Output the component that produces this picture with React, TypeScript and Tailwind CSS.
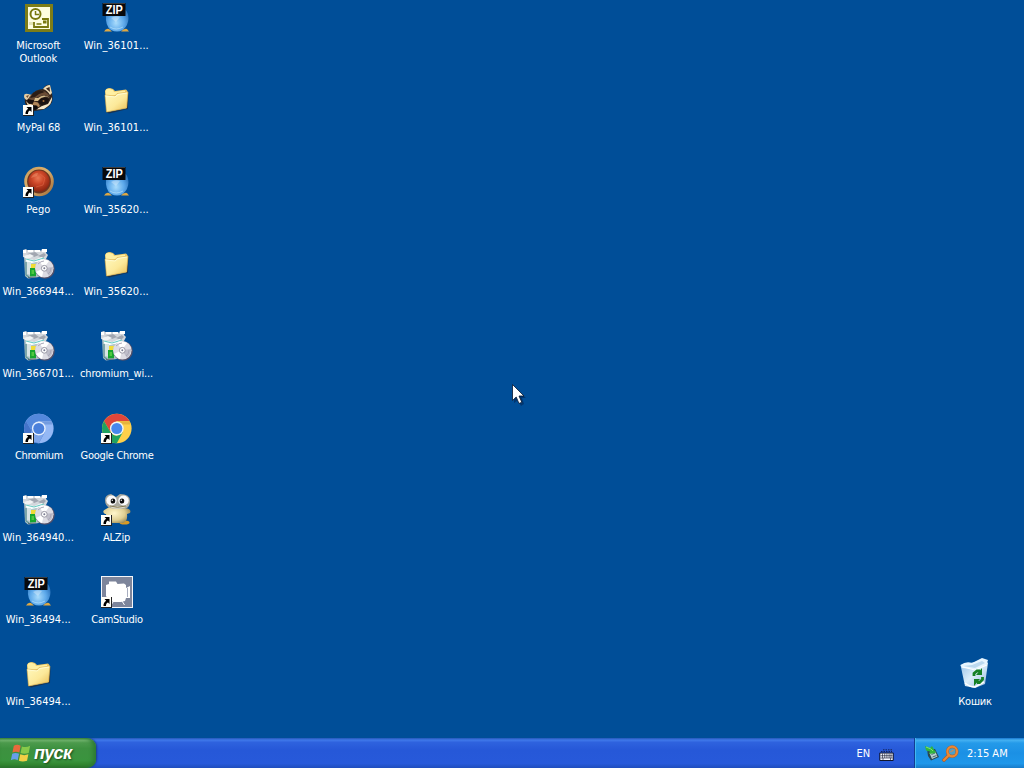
import React from 'react';

type IconName = 'outlook' | 'raccoon' | 'pego' | 'setup' | 'chromium' | 'chrome' | 'zip' | 'folder' | 'alzip' | 'cam' | 'bin';
type Item = { icon: IconName; label: string; shortcut?: boolean; track?: string };

const svgClass = 'block h-8 w-8 overflow-visible';
const shiftedClass = '-ml-px block h-8 w-8 overflow-visible';

function Shortcut() {
  return (
    <svg viewBox="0 0 11 11" className="absolute bottom-0 left-0 h-[11px] w-[11px]">
      <rect width="11" height="11" fill="#222" />
      <rect x="0" y="0" width="10" height="10" fill="#fffef8" />
      <path d="M3.500 2H8.500V7L7 5.500C5.500 6.200 5 7.200 5 9H2.500C2.300 6.700 3.300 5 5.200 3.700Z" fill="#000" />
    </svg>
  );
}

function Outlook() {
  return (
    <svg viewBox="0 0 32 32" className={svgClass}>
      <rect x="2" y="2" width="28" height="28" fill="#7d7d18" />
      <rect x="5" y="5" width="22" height="22" fill="#fdfde0" />
      <circle cx="12.500" cy="12" r="5" fill="#fffff5" stroke="#77770f" strokeWidth="2" />
      <path d="M12.500 9v3.500h3.500" fill="none" stroke="#77770f" strokeWidth="1.500" />
      <path d="M19 17H25V25H11V20" fill="none" stroke="#77770f" strokeWidth="1.800" />
      <path d="M13.500 22h5" stroke="#77770f" strokeWidth="1.500" />
      <rect x="20" y="18.500" width="3.500" height="3" fill="#77770f" />
      <path d="M7 20v3M9 20v3" stroke="#c9c98a" />
    </svg>
  );
}

function Raccoon() {
  return (
    <svg viewBox="0 0 32 32" className={shiftedClass}>
      <path d="M3 14Q1 10 5 10L9 11Q14 5 21 5Q24 0 28 1L30 9Q31 15 30 18Q27 24 20 26L12 27L5 22Q2 19 3 14Z" fill="#33241c" />
      <path d="M21 5Q24 1 28 1L30 9L28 11Q25 6 21 5Z" fill="#ead9b6" />
      <path d="M24 4.500L27.500 3L28 8Z" fill="#3b271f" />
      <path d="M2 12Q2 9 6 10L10 11L5 16Q2 15 2 12Z" fill="#e4cda4" />
      <path d="M4 12L7 11L5.500 14Z" fill="#6e4d35" />
      <path d="M10 10Q16 6 22 7Q26 9 28 13L22 11L16 13L12 16L6 17Q7 12 10 10Z" fill="#6b4c35" />
      <path d="M11 9Q17 5 23 8L17 10L13 13L8 14Z" fill="#2b1c15" />
      <path d="M16 14Q22 9 28 14L24 12.500L19 14L16 17L12 17L13 14Z" fill="#d8bd8c" />
      <path d="M30 13Q31 20 22 25L14 25.500L20 22L26 20Z" fill="#f7e8ca" />
      <path d="M17 16Q22 12 27 15L26 19L20 21.500L16 18Z" fill="#1b1210" />
      <circle cx="21.500" cy="17" r="1" fill="#a9713b" />
      <path d="M6 15L12 16.500L11 20L5 19Z" fill="#1b1210" />
      <path d="M4 17L7 20L10 20L9 22L6 22Z" fill="#ead3ab" />
      <path d="M12 17.500L16 18.500L18 22L15 24L11 23L10 21Z" fill="#b08558" />
      <ellipse cx="13" cy="23.500" rx="2.800" ry="2.200" fill="#100b0b" />
    </svg>
  );
}

function Pego() {
  return (
    <svg viewBox="0 0 32 32" className={shiftedClass}>
      <defs>
        <radialGradient id="pegoBall" cx=".45" cy=".35" r=".65">
          <stop stopColor="#ea7752" /><stop offset=".45" stopColor="#cb4527" /><stop offset="1" stopColor="#8a2410" />
        </radialGradient>
        <linearGradient id="pegoRing" x1="0" y1="0" x2="1" y2="1">
          <stop stopColor="#c79a58" /><stop offset=".45" stopColor="#deb16e" /><stop offset="1" stopColor="#9c6734" />
        </linearGradient>
      </defs>
      <circle cx="17" cy="15.500" r="14.800" fill="url(#pegoRing)" />
      <circle cx="17" cy="15.500" r="11.900" fill="#6e3520" />
      <circle cx="17" cy="15.200" r="10.600" fill="url(#pegoBall)" />
      <path d="M9 12Q11 7 16 7L15 10Z" fill="#f4a079" opacity=".4" />
      <path d="M18 8L23 12L21 19L14 21" fill="none" stroke="#e36c49" opacity=".5" />
    </svg>
  );
}

function Setup() {
  return (
    <svg viewBox="0 0 32 32" className={shiftedClass}>
      <path d="M2 7L12 5L24 7L24 28L6 30.500L3 28Z" fill="#b3c4c7" />
      <path d="M1 2L4 1L5 2L18 2L19 3L20 1L25 1L24 5L26 7L24 11L20 10L11 12L1 9Z" fill="#d3d7dc" />
      <path d="M1 2h3v3H1M6 2h5v2H6M13 2h5v2h-5M20 1h5v3h-5" fill="#fff" />
      <path d="M5 6l8-2 4 3-5 2M16 8l6-3 2 2-3 3" fill="#a1a6b0" />
      <path d="M2 8L8 6L12 8L8 10L3 10Z" fill="#f1f3f4" />
      <path d="M4 10L12 12L20 9L23 12L22 15L14 14L6 16L4 13Z" fill="#f8fffe" />
      <path d="M4 11L12 13L22 10" fill="none" stroke="#6ac9c2" strokeWidth="1.200" />
      <path d="M4 14V27L7 29" stroke="#5a9296" strokeWidth="1.200" fill="none" />
      <path d="M5 14H9V27L5 26Z" fill="#d7e4e5" />
      <path d="M6 29.500L14 29" stroke="#556d75" />
      <rect x="9" y="16" width="5" height="6" fill="#f0dc35" />
      <path d="M8 20h6v8l-6 .5Z" fill="#18a52f" />
      <path d="M9.500 22h2.500v4h-2.500" fill="#4fc840" />
      <circle cx="23" cy="21" r="9.800" fill="#514f69" />
      <circle cx="22.300" cy="20.300" r="9.300" fill="#dddce3" />
      <path d="M22 20L17 12.500Q22 10 27 13Z" fill="#fff" />
      <path d="M22 20L31 19Q31 24 27 28Z" fill="#bebdc9" />
      <path d="M22 20L14 24Q17 28 20 29Z" fill="#fff" />
      <path d="M16 16Q19 13 22 13M26 26Q29 24 29 20" fill="none" stroke="#aaa8b8" />
      <circle cx="22.300" cy="20.300" r="2.900" fill="#fff" stroke="#9998a5" />
      <circle cx="22.300" cy="20.300" r="1" fill="#77798e" />
    </svg>
  );
}

function Chrome({ blue = false }: { blue?: boolean }) {
  return (
    <svg viewBox="0 0 32 32" className={shiftedClass}>
      <circle cx="16.800" cy="16.500" r="14.800" fill={blue ? '#94b8f5' : '#ffd04a'} />
      <path d="M4 9.100A14.800 14.800 0 0 1 29.600 9.100H16.800L10.400 20.100Z" fill={blue ? '#5388dc' : '#df463b'} />
      <path d="M4 9.100L10.400 20.100Q12.800 23.700 16.800 23.700L22.900 20.100L16.800 31.300A14.800 14.800 0 0 1 4 9.100Z" fill={blue ? '#4474ca' : '#20a261'} />
      {blue && <path d="M9 19L10.400 20.100Q12.800 23.700 16.800 23.700L22.900 20.100L16.800 31.300L9 29Z" fill="#7ea6ea" />}
      <path d="M16.800 9.300H29.500L30.500 12.500L22 12.500Z" fill={blue ? '#3766b8' : '#b88225'} opacity=".35" />
      <circle cx="16.800" cy="16.500" r="6.900" fill={blue ? '#e5effd' : '#f2f5f2'} />
      <circle cx="16.800" cy="16.500" r="5.500" fill={blue ? '#4a80db' : '#4788ee'} />
    </svg>
  );
}

function Zip() {
  return (
    <svg viewBox="0 0 32 32" className={shiftedClass}>
      <defs>
        <radialGradient id="zipEgg" cx=".45" cy=".65" r=".6">
          <stop stopColor="#a9dcfc" /><stop offset=".6" stopColor="#5ca8ea" /><stop offset="1" stopColor="#3078c0" />
        </radialGradient>
      </defs>
      <path d="M6 12Q6 5 17 5T28.500 16Q28.500 23 23 28Q17 31 11 28Q5 24 6 12Z" fill="url(#zipEgg)" />
      <path d="M11 16Q15 13 20 15L16 20Z" fill="#fff" opacity=".3" />
      <path d="M10 25Q16 29 23 25" stroke="#cff2ff" fill="none" opacity=".5" />
      <path d="M4 29.500Q6 26 9 27L12 29.500ZM21 29.500Q24 26 27 27L29 29.500Z" fill="#dfa843" />
      <rect x="2.500" y="1" width="23" height="13" fill="#08090b" />
      <path d="M3 1.500H25" stroke="#3d3d3d" />
      <text x="14.300" y="12" textAnchor="middle" textLength="17" lengthAdjust="spacingAndGlyphs" className="fill-white font-['Liberation_Sans',sans-serif] text-[13px] font-bold">ZIP</text>
    </svg>
  );
}

function Folder() {
  return (
    <svg viewBox="0 0 32 32" className={shiftedClass}>
      <defs>
        <linearGradient id="folderFace" x1="0" y1="0" x2="1" y2="1">
          <stop stopColor="#fffac0" /><stop offset=".55" stopColor="#fce99a" /><stop offset="1" stopColor="#e9bd54" />
        </linearGradient>
      </defs>
      <path d="M6 28L9 29.500L28 25L28.500 8L26 25Z" fill="#202a39" opacity=".75" />
      <path d="M5 7Q6 4 10 4L13 5L15 7L26 5.500L27.500 7L27 24L7 28Z" fill="#edc866" />
      <path d="M5.500 7Q6 4 10 5L13 6L14 8L25 6.500V9L6 13Z" fill="#fff0a2" />
      <path d="M5 11L15 12L17 9.500L28 8L26.500 24L6.500 28Z" fill="url(#folderFace)" stroke="#d9a946" strokeWidth=".6" />
      <path d="M5.500 12L15 13L18 10.500L27 9" fill="none" stroke="#fffbd0" />
    </svg>
  );
}

function Alzip() {
  return (
    <svg viewBox="0 0 32 32" className={shiftedClass}>
      <defs>
        <radialGradient id="alBody" cx=".4" cy=".45" r=".65">
          <stop stopColor="#fff6cc" /><stop offset=".6" stopColor="#dfcf93" /><stop offset="1" stopColor="#95834f" />
        </radialGradient>
      </defs>
      <ellipse cx="24.500" cy="28.500" rx="5" ry="2" fill="#d89a25" />
      <path d="M5 20Q1 17 6 15L11 12Q19 10 25 14Q32 15 30 19L27 20Q28 27 23 29H11Q6 26 6 20Z" fill="url(#alBody)" />
      <path d="M5 6Q5 1 11 0L16 3L20 0Q30 0 30 7Q30 12 27 14Q19 16 10 14Q5 12 5 6Z" fill="#a9a89e" />
      <ellipse cx="11.500" cy="6.500" rx="5.200" ry="5" fill="#fafafa" />
      <ellipse cx="23.500" cy="6.500" rx="5.200" ry="5" fill="#fafafa" />
      <ellipse cx="13" cy="7" rx="2.300" ry="2.600" fill="#101010" />
      <ellipse cx="22" cy="7" rx="2.300" ry="2.600" fill="#101010" />
      <circle cx="12.300" cy="6.200" r=".7" fill="#fff" /><circle cx="21.300" cy="6.200" r=".7" fill="#fff" />
      <path d="M9 11Q17 13.500 27 11L25 13.500Q17 16 11 13.500Z" fill="#dedac8" />
      <path d="M10 12Q17 14.500 26 12" stroke="#807650" fill="none" />
    </svg>
  );
}

function Cam() {
  return (
    <svg viewBox="0 0 32 32" className={svgClass}>
      <rect x=".5" y=".5" width="31" height="31" fill="#7d859b" stroke="#f4f6fb" />
      <path d="M5 9L8 8V5.500H15L16.500 8L23 7.500L25 9V12L29 10V22H25L24 25L20 26H12L8 24L5 20Z" fill="#fff" />
      <path d="M12 26L10 29M21 25L23.500 29" stroke="#fff" />
      <path d="M26.500 12V21" stroke="#a7adbf" />
    </svg>
  );
}

function Bin() {
  return (
    <svg viewBox="0 0 32 32" className={shiftedClass}>
      <defs>
        <linearGradient id="binFace" x1="0" y1="0" x2="1" y2="1">
          <stop stopColor="#8fbbe4" /><stop offset=".5" stopColor="#dceefa" /><stop offset="1" stopColor="#90b4d9" />
        </linearGradient>
      </defs>
      <path d="M2.500 7L27 2L30 5L27 26L17 30L7 28Z" fill="url(#binFace)" />
      <path d="M2.500 7Q8 3 14 5L24 0L30 2L28 8L17 11L4 10Z" fill="#e7f5ff" />
      <path d="M5 8L14 7L24 3L27 5L17 10Z" fill="#bcd9ef" />
      <path d="M5 9L17 12L29 7" fill="none" stroke="#fff" />
      <path d="M7 25Q12 29 17 29L26 24" fill="none" stroke="#fff" strokeWidth="1.500" />
      <g fill="none" stroke="#168026" strokeWidth="2.800">
        <path d="M16 18V15.500L19 13H22" />
        <path d="M24.500 19V21.500L21.500 24.500H19" />
      </g>
      <path d="M24 10V17H18ZM16 21H22L16 28Z" fill="#168026" />
    </svg>
  );
}

function Glyph({ name }: { name: IconName }) {
  switch (name) {
    case 'outlook': return <Outlook />;
    case 'raccoon': return <Raccoon />;
    case 'pego': return <Pego />;
    case 'setup': return <Setup />;
    case 'chromium': return <Chrome blue />;
    case 'chrome': return <Chrome />;
    case 'zip': return <Zip />;
    case 'folder': return <Folder />;
    case 'alzip': return <Alzip />;
    case 'cam': return <Cam />;
    default: return <Bin />;
  }
}

function DesktopItem({ icon, label, shortcut, track = 'mr-[1.500px] tracking-[0.06px]' }: Item) {
  return (
    <div className="flex h-[82px] w-[78px] shrink-0 flex-col items-center pt-0.5">
      <div className="relative h-8 w-8 shrink-0">
        <Glyph name={icon} />
        {shortcut && <Shortcut />}
      </div>
      <span className={`mt-[5px] whitespace-pre text-center leading-[13px] ${track}`}>{label}</span>
    </div>
  );
}

const left: Item[] = [
  { icon: 'outlook', label: 'Microsoft\nOutlook', track: 'mr-[1.500px] tracking-[-0.13px]' },
  { icon: 'raccoon', label: 'MyPal 68', shortcut: true, track: 'mr-px tracking-[-0.1px]' },
  { icon: 'pego', label: 'Pego', shortcut: true },
  { icon: 'setup', label: 'Win_366944...' },
  { icon: 'setup', label: 'Win_366701...' },
  { icon: 'chromium', label: 'Chromium', shortcut: true, track: 'tracking-[-0.45px]' },
  { icon: 'setup', label: 'Win_364940...' },
  { icon: 'zip', label: 'Win_36494...' },
  { icon: 'folder', label: 'Win_36494...' },
];

const right: Item[] = [
  { icon: 'zip', label: 'Win_36101...' },
  { icon: 'folder', label: 'Win_36101...' },
  { icon: 'zip', label: 'Win_35620...' },
  { icon: 'folder', label: 'Win_35620...' },
  { icon: 'setup', label: 'chromium_wi...', track: 'mr-px tracking-[-0.15px]' },
  { icon: 'chrome', label: 'Google Chrome', shortcut: true, track: 'tracking-[-0.3px]' },
  { icon: 'alzip', label: 'ALZip', shortcut: true, track: 'mr-px tracking-[-0.2px]' },
  { icon: 'cam', label: 'CamStudio', shortcut: true, track: 'tracking-[-0.3px]' },
];

function StartButton() {
  return (
    <button className="flex h-full w-24 items-center rounded-r-[9px] bg-[linear-gradient(180deg,#3b8a3a_0%,#78b973_7%,#4c9a4c_16%,#3d9140_35%,#3a943e_75%,#31862f_90%,#256c28_100%)] pl-2.5 shadow-[inset_-3px_0_4px_#2d7a33,1px_0_2px_#193f8a]">
      <svg viewBox="0 0 20 18" className="h-5 w-[22px]">
        <path d="M3.500 2.500Q6.500 .5 9.700 2.500L8.500 8.500Q5.500 7 2.200 8.500Z" fill="#e86a3c" />
        <path d="M10.800 3Q14.500 4.500 18.300 2.500L17 9Q13 10.500 9.600 9Z" fill="#86c94a" />
        <path d="M2 9.700Q5 8.200 8.200 9.700L7 15.500Q4 14 .8 15.500Z" fill="#669fea" />
        <path d="M9.300 10.200Q12.800 11.700 16.700 10.200L15.500 16Q11.500 17.500 8.100 16Z" fill="#f1cf45" />
      </svg>
      <span className="ml-0.5 font-['Liberation_Sans',sans-serif] text-[18px] leading-5 font-bold tracking-[-0.7px] text-white italic [text-shadow:1px_1px_2px_#1c4b1c]">пуск</span>
    </button>
  );
}

function Keyboard() {
  return (
    <svg viewBox="0 0 15 12" className="block h-3 w-[15px]">
      <path d="M2 2.500H13M4 .8H14" fill="none" stroke="#16245a" strokeDasharray="1.500 1" />
      <rect x=".3" y="3.500" width="14.400" height="8.500" rx="1" fill="#10152b" />
      <rect x="1.300" y="4.500" width="12.400" height="6.500" fill="#f4f6ff" />
      <path d="M1.500 6.700H13.500M1.500 9H13.500" stroke="#10152b" strokeWidth=".6" />
      <path d="M3.500 4.500V9M5.700 4.500V9M7.900 4.500V9M10.100 4.500V9M12 4.500V9M4 9V11M11.500 9V11" stroke="#10152b" strokeWidth=".6" />
    </svg>
  );
}

function Taskbar() {
  return (
    <footer className="flex h-[30px] shrink-0 bg-[linear-gradient(180deg,#2458b8_0%,#3f78ea_7%,#2e62de_15%,#2658d8_40%,#2759da_85%,#1f4dbd_100%)]">
      <StartButton />
      <div className="flex flex-1 items-center justify-end pr-5">
        <span className="mt-[3px] mr-[9px] tracking-[-0.1px]">EN</span>
        <span className="mt-[3px]"><Keyboard /></span>
      </div>
      <div className="flex w-[110px] items-center border-l border-[#123d92] bg-[linear-gradient(180deg,#1876cf_0%,#45b1f2_7%,#249ae9_17%,#1b90e5_50%,#1e97ea_85%,#177bc9_100%)] pl-[9px] shadow-[inset_1px_0_#43b9f0]">
        <svg viewBox="0 0 16 16" className="h-4 w-4">
          <path d="M3 4L11 4L15 12L7 15.500L4 11Z" fill="#2b4850" />
          <path d="M5.500 8L11 6L13.500 11.500L8 14Z" fill="#b9d2d3" />
          <path d="M7.500 9.500L11 8M8.500 12L12.500 10.500" stroke="#4b6670" />
          <path d="M1 1L6 3L8 1L12 8L5 9L6 6.500L2 5.500Z" fill="#2fb53f" />
          <path d="M2 2L7 4L9 6" stroke="#82e26b" fill="none" />
        </svg>
        <svg viewBox="0 0 17 17" className="ml-0.5 h-[17px] w-[17px]">
          <path d="M2 15L7 10" stroke="#a85c2c" strokeWidth="3.600" strokeLinecap="round" />
          <circle cx="10.200" cy="6.500" r="4.800" fill="#4aa0cb" stroke="#a85c2c" strokeWidth="3" />
          <path d="M2 15L7 10" stroke="#ea8834" strokeWidth="2.200" strokeLinecap="round" />
          <circle cx="10.200" cy="6.500" r="4.800" fill="none" stroke="#ea8834" strokeWidth="2.200" />
          <path d="M8.500 7L11.500 5" stroke="#c98a5b" strokeWidth="1.200" />
        </svg>
        <span className="mt-[3px] ml-2 whitespace-nowrap">2:15 AM</span>
      </div>
    </footer>
  );
}

export default function App() {
  return (
    <div className="relative flex h-[768px] w-[1024px] flex-col overflow-hidden bg-[#004e98] font-['DejaVu_Sans_Condensed','DejaVu_Sans',sans-serif] text-[11px] font-normal text-white [font-stretch:condensed]">
      <main className="flex h-[738px] shrink-0">
        <div className="flex flex-col">{left.map((item, i) => <DesktopItem key={i} {...item} />)}</div>
        <div className="flex flex-col">{right.map((item, i) => <DesktopItem key={i} {...item} />)}</div>
        <div className="mt-auto mr-[10px] ml-auto">
          <DesktopItem icon="bin" label="Кошик" track="tracking-[-0.25px]" />
        </div>
      </main>
      <Taskbar />
      <svg viewBox="0 0 14 22" className="absolute top-[384px] left-[512px] h-[22px] w-3.5 overflow-visible">
        <path d="M2 3V19L6 16L9 22L12 20L10 14H14Z" fill="#001b42" opacity=".45" />
        <path d="M.5 .5V16.500L4.200 13L7 19.500L9.800 18.200L7 12H12Z" fill="#fff" stroke="#07162f" strokeWidth=".8" />
      </svg>
    </div>
  );
}
